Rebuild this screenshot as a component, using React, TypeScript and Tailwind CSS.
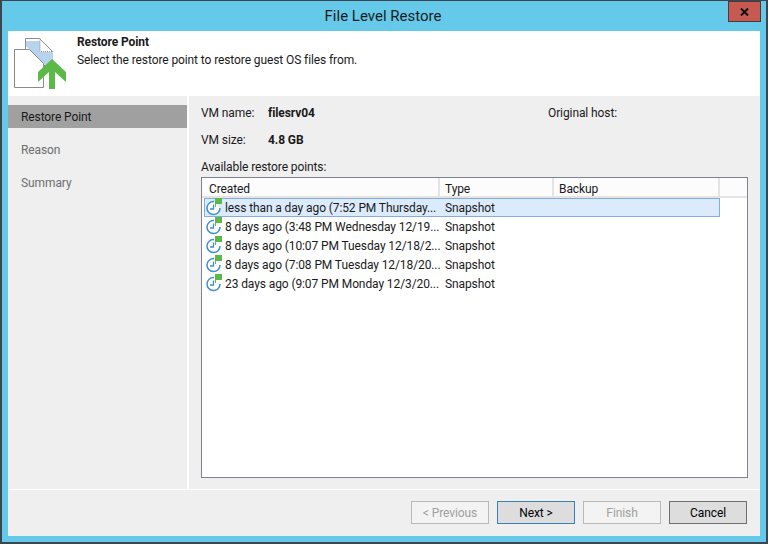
import React from "react";

const rows = [
  "less than a day ago (7:52 PM Thursday...",
  "8 days ago (3:48 PM Wednesday 12/19...",
  "8 days ago (10:07 PM Tuesday 12/18/2...",
  "8 days ago (7:08 PM Tuesday 12/18/20...",
  "23 days ago (9:07 PM Monday 12/3/20...",
];

const PointIcon = () => (
  <svg width="18" height="18" viewBox="0 0 18 18" className="shrink-0 -mt-[1px]">
    <path d="M9 3.6 A6.5 6.5 0 1 0 15 10" fill="#fff" stroke="#3f8fd0" strokeWidth="1.5" />
    <path d="M8.5 6.5v4.5H5" fill="none" stroke="#3f8fd0" strokeWidth="1.3" />
    <path d="M10 0h7v6h-6v3h-1z" fill="#5cb947" />
  </svg>
);

// coordinates follow the page minus the 13,35 origin of the svg
const RestoreIcon = () => (
  <svg width="54" height="56" viewBox="0 0 54 56" className="shrink-0">
    <path d="M12.5 3.5h14l13 13v14h-27z" fill="#fff" stroke="#8a8a8a" />
    <path d="M13 6h14v11h13v9l-6 6L13 11z" fill="#b8d3ee" />
    <path d="M27 3.5v13h13" fill="none" stroke="#8a8a8a" strokeDasharray="1 1" />
    <path d="M1.5 14.5h15l14 14v24h-29z" fill="#fff" stroke="#8a8a8a" />
    <path d="M39 24 53 37V47L42 37V54H36V37L25 47V37z" fill="#5cb947" />
  </svg>
);

const Btn = ({ label, kind }: { label: string; kind: "off" | "next" | "cancel" }) => (
  <div
    className={
      kind === "off"
        ? "w-[78px] h-[23px] flex items-center justify-center border border-[#b8b8b8] bg-[#f3f3f3] text-[#a0a0a0]"
        : kind === "next"
        ? "w-[78px] h-[23px] flex items-center justify-center border border-[#3c7fb1] bg-[#dddddd] text-black"
        : "w-[78px] h-[23px] flex items-center justify-center border border-[#707070] bg-[#dddddd] text-black"
    }
  >
    {label}
  </div>
);

const App = () => {
  return (
    <div className="w-[768px] h-[544px] bg-[#65c9ea] border-l-[2px] border-r-[2px] border-b-[2px] border-[#3b4650] flex flex-col overflow-hidden font-['Roboto','Liberation_Sans',sans-serif] text-[12px] tracking-[-0.1px] text-[#1a1a1a]">
      <div className="h-[31px] border-t border-[#3b4650] flex items-center shrink-0">
        <div className="flex-1 text-center text-[15px] tracking-normal text-[#1c1c1c] pl-[36px] pt-[1px]">File Level Restore</div>
        <div className="w-[33px] h-[21px] mr-[5px] self-start bg-[#c75a50] border border-[#4a3a40] flex items-center justify-center">
          <svg width="9" height="8" viewBox="0 0 9 8">
            <path d="M1 0.5 8 7.5M8 0.5 1 7.5" stroke="#111" strokeWidth="2" />
          </svg>
        </div>
      </div>
      <div className="mx-[6px] mb-[6px] flex-1 bg-[#efefef] flex flex-col min-h-0">
        <div className="h-[65px] bg-white flex shrink-0 pl-[5px]">
          <div className="pt-[4px]"><RestoreIcon /></div>
          <div className="pl-[10px] pt-[3px]">
            <div className="font-bold leading-[16px]">Restore Point</div>
            <div className="leading-[16px] mt-[2px]">Select the restore point to restore guest OS files from.</div>
          </div>
        </div>
        <div className="flex flex-1 min-h-0 border-b border-white">
          <div className="w-[181px] border-r-[2px] border-white pt-[9px] shrink-0">
            <div className="h-[23px] bg-[#a0a0a0] pl-[13px] flex items-center">Restore Point</div>
            <div className="mt-[10px] h-[23px] pl-[13px] flex items-center text-[#6e6e6e]">Reason</div>
            <div className="mt-[10px] h-[23px] pl-[13px] flex items-center text-[#6e6e6e]">Summary</div>
          </div>
          <div className="flex-1 flex flex-col pl-[12px] pt-[9px] min-w-0">
            <div className="flex h-[16px] items-center">
              <div className="w-[67px]">VM name:</div>
              <div className="w-[280px] font-bold">filesrv04</div>
              <div>Original host:</div>
            </div>
            <div className="flex h-[16px] items-center mt-[11px]">
              <div className="w-[67px]">VM size:</div>
              <div className="font-bold">4.8 GB</div>
            </div>
            <div className="h-[16px] mt-[11px] leading-[16px]">Available restore points:</div>
            <div className="mt-[2px] w-[547px] h-[301px] bg-white border border-[#82828c] flex flex-col">
              <div className="h-[20px] pl-[2px] flex bg-[#fcfcfc] border-b-2 border-[#e4e4e4] shrink-0">
                <div className="w-[236px] border-r-2 border-[#e4e4e4] pl-[5px] pt-[3px] flex items-center">Created</div>
                <div className="w-[114px] border-r-2 border-[#e4e4e4] pl-[5px] pt-[3px] flex items-center">Type</div>
                <div className="w-[166px] border-r-2 border-[#e4e4e4] pl-[5px] pt-[3px] flex items-center">Backup</div>
              </div>
              {rows.map((r, i) => (
                <div
                  key={r}
                  className={
                    i === 0
                      ? "h-[19px] ml-[2px] w-[516px] flex items-center bg-[#dcebfc] border border-[#84ace0] shrink-0"
                      : "h-[19px] ml-[2px] w-[516px] flex items-center border border-transparent shrink-0"
                  }
                >
                  <div className="w-[236px] flex items-center gap-[2px] whitespace-nowrap"><PointIcon />{r}</div>
                  <div className="pl-[4px]">Snapshot</div>
                </div>
              ))}
            </div>
          </div>
        </div>
        <div className="h-[46px] flex justify-end items-start gap-[8px] pt-[11px] pr-[13px] shrink-0">
          <Btn label="< Previous" kind="off" />
          <Btn label="Next >" kind="next" />
          <Btn label="Finish" kind="off" />
          <Btn label="Cancel" kind="cancel" />
        </div>
      </div>
    </div>
  );
};

export default App;
